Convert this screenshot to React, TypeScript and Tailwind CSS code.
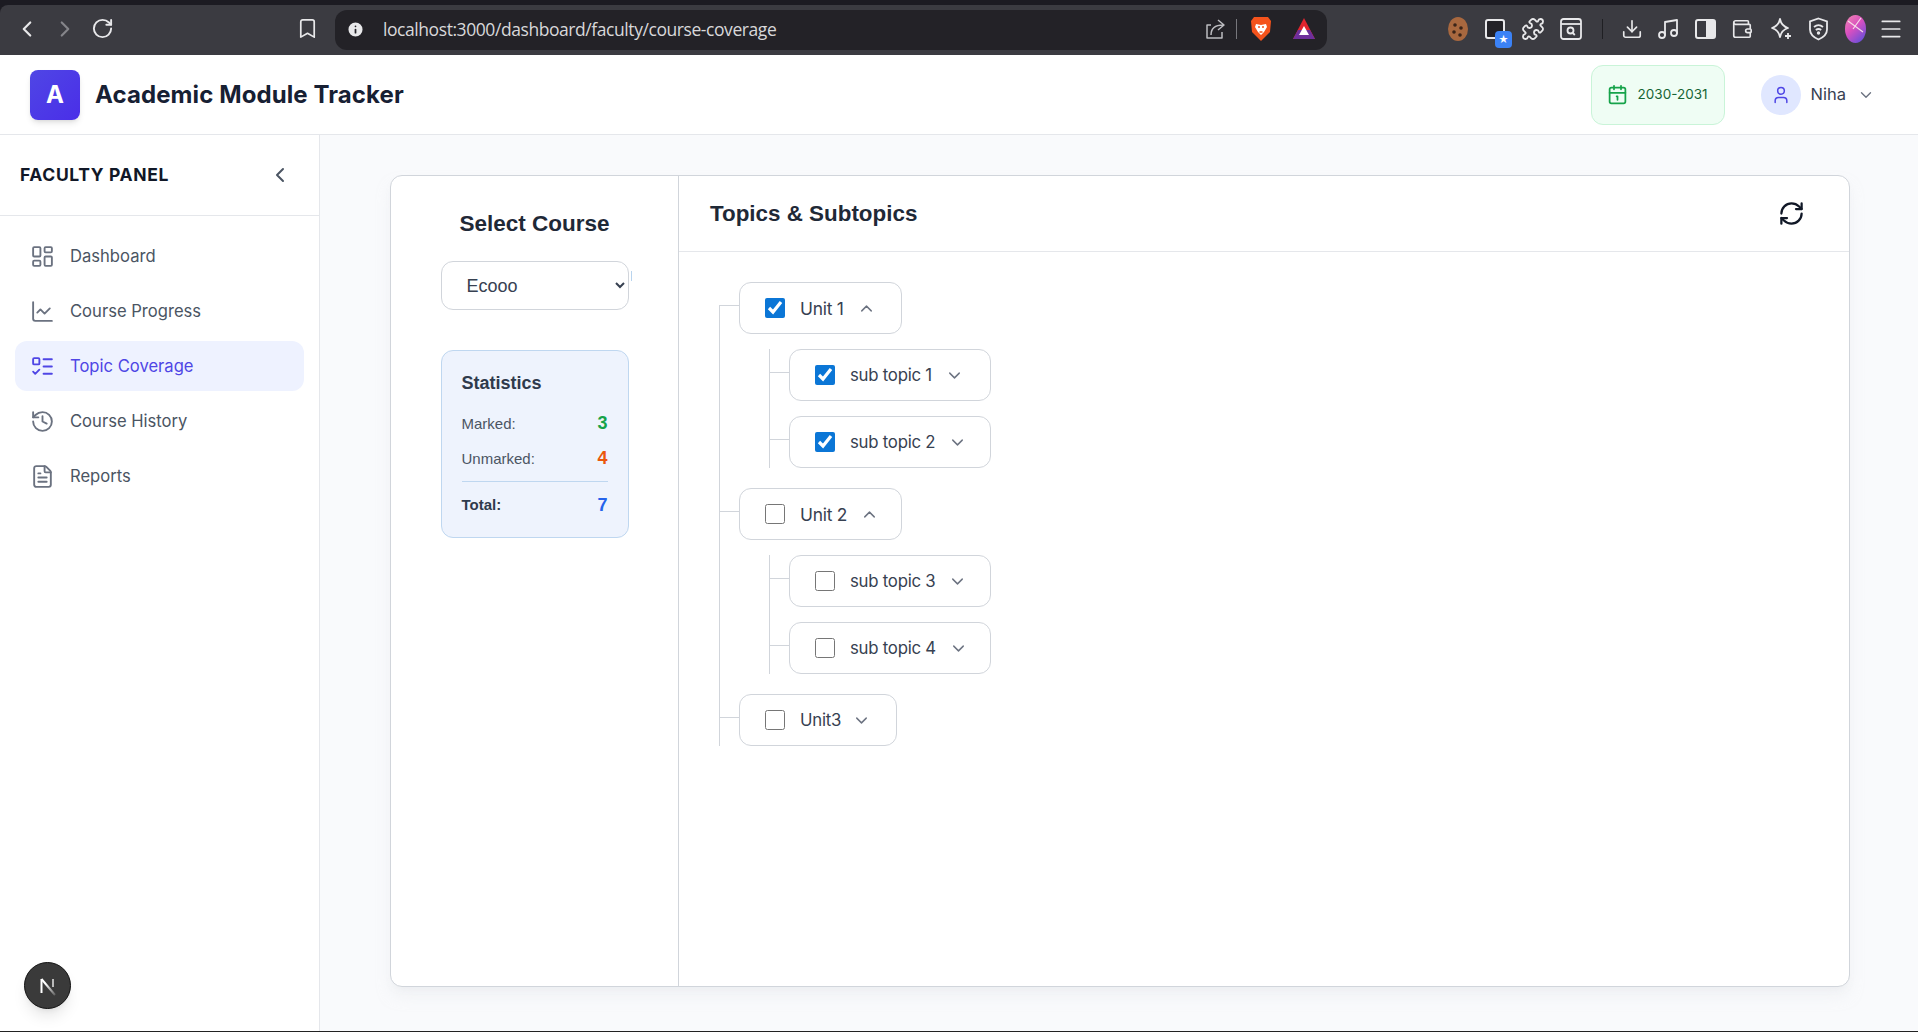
import React from "react";
import {
  ChevronLeft, ChevronRight, ChevronDown, ChevronUp, RotateCw, Bookmark, Info, Download, Music, Wallet, Menu, Puzzle, Calendar1, User,
  LayoutDashboard, LineChart, ListTodo, History, FileText, RefreshCw,
} from "lucide-react";

function BraveIcon() {
  return (
    <svg width="22" height="26" viewBox="0 0 22 26" aria-hidden="true">
      <path d="M4 1h14l3 4-1 11-9 9-9-9L1 5z" fill="#f4531c" />
      <path d="M6 8l5 1 5-1 1 3-3 5-3 3-3-3-3-5z" fill="#fff" />
      <path d="M8 11h2M12 11h2M9.500 16h3" stroke="#f4531c" strokeWidth="1.400" />
    </svg>
  );
}

function TriangleIcon() {
  return (
    <svg width="24" height="22" viewBox="0 0 24 22" aria-hidden="true">
      <path d="M12 0l11 21H1z" fill="#e0242e" />
      <path d="M1 21h22l-5-9H6z" fill="#6d2f9c" />
      <path d="M12 8l5 9H7z" fill="#fff" />
    </svg>
  );
}

function ShareIcon() {
  return (
    <svg className="ml-auto" width="22" height="22" viewBox="0 0 22 22" fill="none" stroke="#bcbcc0" strokeWidth="1.500" aria-hidden="true">
      <path d="M7 7H3v13h15v-6" strokeLinejoin="round" />
      <path d="M7 17c0-6 4-10 12-10M14 2l6 5-6 5" strokeLinejoin="round" />
    </svg>
  );
}

function CookieIcon() {
  return (
    <svg className="ml-[120px]" width="22" height="26" viewBox="0 0 22 26" aria-hidden="true">
      <ellipse cx="11" cy="13" rx="10" ry="12" fill="#a8683f" />
      <circle cx="8" cy="9" r="1.800" fill="#3a2418" />
      <circle cx="14" cy="12" r="1.800" fill="#3a2418" />
      <circle cx="7" cy="16" r="1.800" fill="#3a2418" />
      <circle cx="13" cy="19" r="1.800" fill="#3a2418" />
    </svg>
  );
}

function ReaderIcon() {
  return (
    <svg className="ml-[15px]" width="22" height="22" viewBox="0 0 22 22" fill="none" stroke="#e8e8ea" strokeWidth="1.800" aria-hidden="true">
      <rect x="1" y="1" width="20" height="20" rx="2.500" />
      <path d="M1 6h20" />
      <circle cx="10.500" cy="12.500" r="3" />
      <path d="M12.800 15l2 2" />
    </svg>
  );
}

function SparkleIcon() {
  return (
    <svg className="ml-[17px]" width="22" height="24" viewBox="0 0 22 24" fill="none" stroke="#e8e8ea" strokeWidth="1.800" aria-hidden="true">
      <path d="M10 2c1 5 3 7.500 8 9-5 1.500-7 4-8 9-1-5-3-7.500-8-9 5-1.500 7-4 8-9z" strokeLinejoin="round" />
      <path d="M18 16v6M15 19h6" />
    </svg>
  );
}

function BrowserBar() {
  return (
    <div className="h-[55px] shrink-0 bg-[#1c1b22] pt-[5px]">
      <div className="flex h-[50px] items-center rounded-tl-lg bg-[#3b3b41] text-[#e8e8ea]">
        <div className="flex w-[335px] items-center pb-[3px]">
          <ChevronLeft className="ml-[14px] size-[26px]" strokeWidth={2} />
          <ChevronRight className="ml-[12px] size-[26px] text-[#85858a]" strokeWidth={2} />
          <RotateCw className="ml-[13px] size-[23px]" strokeWidth={2} />
          <Bookmark className="ml-[182px] size-[23px]" strokeWidth={1.800} />
        </div>
        <div className="flex h-[40px] w-[992px] items-center rounded-xl bg-[#232227] pb-[2px] pl-[11px] pr-[11px]">
          <Info className="size-[19px] fill-[#e8e8ea] text-[#232227]" strokeWidth={2.200} />
          <span className="ml-[18px] font-['Open_Sans',sans-serif] text-[17.500px] tracking-[-0.430px] text-[#d8d8da]">localhost:3000/dashboard/faculty/course-coverage</span>
          <ShareIcon />
          <span className="ml-[10px] h-[20px] w-px bg-[#77777c]" />
          <span className="ml-[13px] flex"><BraveIcon /></span>
          <span className="ml-[20px] flex"><TriangleIcon /></span>
        </div>
        <div className="relative flex flex-1 items-center pb-[3px]">
          <CookieIcon />
          <span className="relative ml-[16px] flex size-[20px] rounded-[3px] border-2 border-[#e8e8ea] bg-[#232227]">
            <span className="absolute left-[8px] top-[10px] flex h-[17px] w-[17px] items-center justify-center rounded bg-[#3b82f6] text-[10px] leading-none text-white">★</span>
          </span>
          <Puzzle className="ml-[16px] size-[24px]" strokeWidth={1.800} />
          <ReaderIcon />
          <span className="ml-[20px] h-[20px] w-px bg-[#1f1f23]" />
          <Download className="ml-[18px] size-[22px]" strokeWidth={1.800} />
          <Music className="ml-[13px] size-[24px]" strokeWidth={1.800} />
          <span className="ml-[15px] flex h-[20px] w-[21px] rounded-[3px] border-2 border-[#e8e8ea]"><span className="ml-auto h-full w-[8px] bg-[#e8e8ea]" /></span>
          <Wallet className="ml-[15px] size-[22px]" strokeWidth={1.800} />
          <SparkleIcon />
          <svg className="ml-[16px]" width="21" height="24" viewBox="0 0 21 24" fill="none" stroke="#e8e8ea" strokeWidth="1.800" aria-hidden="true">
            <path d="M10.500 1.500l8.500 3v8c0 4.500-4 8-8.500 10-4.500-2-8.500-5.500-8.500-10v-8z" />
            <path d="M6 10c3-2.500 6-2.500 9 0M7.800 13c2-1.500 3.400-1.500 5.400 0" />
            <circle cx="10.500" cy="16" r="0.800" fill="#e8e8ea" />
          </svg>
          <svg className="ml-[16px]" width="21" height="28" viewBox="0 0 21 28" aria-hidden="true">
            <defs>
              <linearGradient id="orb" x1="0" y1="0" x2="0.700" y2="1">
                <stop offset="0" stopColor="#f08ab0" />
                <stop offset="0.500" stopColor="#d94fc0" />
                <stop offset="1" stopColor="#6d4fd8" />
              </linearGradient>
            </defs>
            <ellipse cx="10.500" cy="14" rx="10.500" ry="14" fill="url(#orb)" />
            <path d="M3 6l15 11M16 3L8 14" stroke="#f6dbe8" strokeWidth="1.200" fill="none" />
          </svg>
          <Menu className="ml-[12px] size-[26px]" strokeWidth={1.600} />
        </div>
      </div>
    </div>
  );
}

function AppHeader() {
  return (
    <header className="flex h-[80px] shrink-0 items-center border-b border-[#e5e7eb] bg-white pl-[30px] pr-[43px]">
      <div className="flex size-[50px] items-center justify-center rounded-lg bg-[linear-gradient(135deg,#4f46e5,#4a2ee8)] text-[24px] font-bold text-white shadow-md">A</div>
      <h1 className="ml-[15px] text-[24px] font-bold tracking-[0.100px] text-[#172033]">Academic Module Tracker</h1>
      <div className="ml-auto flex h-[60px] w-[134px] items-center rounded-xl border border-[#c9f4d8] bg-[#effdf4] pl-[15px]">
        <Calendar1 className="size-[21px] text-[#16a34a]" strokeWidth={2} />
        <span className="ml-[10px] text-[13.500px] text-[#166534]">2030-2031</span>
      </div>
      <div className="ml-[36px] flex items-center">
        <span className="flex size-[40px] items-center justify-center rounded-full bg-[#e0e7ff] text-[#4f46e5]"><User className="size-[20px]" strokeWidth={1.800} /></span>
        <span className="ml-[10px] text-[16.500px] text-[#374151]">Niha</span>
        <ChevronDown className="ml-[11px] size-[18px] text-[#6b7280]" strokeWidth={1.800} />
      </div>
    </header>
  );
}

const navItems = [
  { label: "Dashboard", Icon: LayoutDashboard },
  { label: "Course Progress", Icon: LineChart },
  { label: "Topic Coverage", Icon: ListTodo, active: true },
  { label: "Course History", Icon: History },
  { label: "Reports", Icon: FileText },
];

function Sidebar() {
  return (
    <aside className="flex w-[320px] shrink-0 flex-col border-r border-[#e5e7eb] bg-white">
      <div className="flex h-[81px] shrink-0 items-center justify-between border-b border-[#e5e7eb] pl-[20px] pr-[27px]">
        <span className="text-[17.500px] font-bold tracking-[0.650px] text-[#111827]">FACULTY PANEL</span>
        <ChevronLeft className="size-[24px] text-[#4b5563]" strokeWidth={2} />
      </div>
      <nav className="flex flex-col gap-[5px] px-[15px] pt-[15px]">
        {navItems.map(({ label, Icon, active }) => (
          <div key={label} className={`flex h-[50px] items-center rounded-xl pl-[15px] text-[16.600px] ${active ? "bg-[#eef2ff] text-[#4f46e5]" : "text-[#4b5563]"}`}>
            <Icon className={`size-[25px] ${active ? "text-[#4f46e5]" : "text-[#6b7280]"}`} strokeWidth={1.800} />
            <span className="ml-[15px]">{label}</span>
          </div>
        ))}
      </nav>
    </aside>
  );
}

function StatRow({ label, value, color }: { label: string; value: number; color: string }) {
  return (
    <div className="flex h-[35px] items-center justify-between">
      <span className="pt-[2px] text-[15px] text-[#4b5563]">{label}</span>
      <span className={`text-[18px] font-bold ${color}`}>{value}</span>
    </div>
  );
}

function LeftPanel() {
  return (
    <div className="relative flex w-[288px] shrink-0 flex-col items-center border-r border-[#d1d5db] pt-[33px] font-['Liberation_Sans',sans-serif]">
      <h2 className="text-[22.500px] font-bold leading-[30px] text-[#1f2937]">Select Course</h2>
      <select className="mt-[22px] h-[49px] w-[188px] rounded-xl border border-[#d1d5db] bg-white pl-[21px] text-[18px] text-[#374151]" defaultValue="Ecooo">
        <option>Ecooo</option>
      </select>
      <span className="absolute left-[240px] top-[95px] h-[10px] w-px bg-[#b9d4ee]" />
      <div className="mt-[40px] h-[188px] w-[188px] rounded-xl border border-[#bfd7f0] bg-[#eef3fd] px-[20px] pt-[21px]">
        <h3 className="text-[18px] font-bold leading-[22px] text-[#2f3a4c]">Statistics</h3>
        <div className="mt-[12px]">
          <StatRow label="Marked:" value={3} color="text-[#16a34a]" />
          <StatRow label="Unmarked:" value={4} color="text-[#ea580c]" />
        </div>
        <div className="mt-[5px] flex h-[47px] items-center justify-between border-t border-[#bfd7f0]">
          <span className="text-[15px] font-bold text-[#2f3a4c]">Total:</span>
          <span className="text-[18px] font-bold text-[#2563eb]">7</span>
        </div>
      </div>
    </div>
  );
}

function TreeNode({ label, checked, open, width, textSize = "text-[16.800px]", chevronGap = "ml-[13px]" }: { label: string; checked?: boolean; open?: boolean; width: string; textSize?: string; chevronGap?: string }) {
  const Chevron = open ? ChevronUp : ChevronDown;
  return (
    <div className={`relative flex h-[52px] items-center rounded-xl border border-[#d1d5db] bg-white pl-[25px] ${width}`}>
      <span className="absolute left-[-21px] top-[22px] h-px w-[20px] bg-[#d1d5db]" />
      <input type="checkbox" checked={!!checked} readOnly className="m-0 size-[20px] accent-[#0b76d6]" />
      <span className={`ml-[15px] pt-[2px] tracking-[-0.250px] text-[#374151] ${textSize}`}>{label}</span>
      <Chevron className={`size-[19px] text-[#6b7280] ${chevronGap}`} strokeWidth={1.800} />
    </div>
  );
}

function SubTree({ children }: { children: React.ReactNode }) {
  return <div className="mt-[15px] ml-[30px] flex flex-col gap-[15px] border-l border-[#d1d5db] pl-[19px]">{children}</div>;
}

function RightPanel() {
  return (
    <div className="flex min-w-0 flex-1 flex-col">
      <div className="flex h-[76px] shrink-0 items-center justify-between border-b border-[#e5e7eb] pl-[31px] pr-[44px]">
        <h2 className="font-['Liberation_Sans',sans-serif] text-[22.400px] font-bold text-[#1f2937]">Topics &amp; Subtopics</h2>
        <RefreshCw className="mb-[1px] size-[27px] text-[#111827]" strokeWidth={2} />
      </div>
      <div className="relative ml-[40px] mt-[30px] flex w-fit flex-col pl-[20px] font-['Inter',sans-serif]">
        <span className="absolute bottom-0 left-0 top-[23px] w-px bg-[#d1d5db]" />
        <TreeNode label="Unit 1" checked open width="w-[163px]" textSize="text-[17.400px]" />
        <SubTree>
          <TreeNode label="sub topic 1" checked width="w-[202px]" />
          <TreeNode label="sub topic 2" checked width="w-[202px]" />
        </SubTree>
        <div className="mt-[20px]"><TreeNode label="Unit 2" open width="w-[163px]" textSize="text-[17.400px]" /></div>
        <SubTree>
          <TreeNode label="sub topic 3" width="w-[202px]" />
          <TreeNode label="sub topic 4" width="w-[202px]" />
        </SubTree>
        <div className="mt-[20px]"><TreeNode label="Unit3" width="w-[158px]" chevronGap="ml-[11px]" /></div>
      </div>
    </div>
  );
}

export default function App() {
  return (
    <div className="relative flex h-[1032px] w-[1918px] flex-col overflow-hidden border-b border-[#222] bg-white font-['Inter',sans-serif]">
      <BrowserBar />
      <AppHeader />
      <div className="flex min-h-0 flex-1">
        <Sidebar />
        <main className="flex min-w-0 flex-1 bg-[#f9fafc] pb-[44px] pl-[70px] pr-[68px] pt-[40px]">
          <div className="flex flex-1 rounded-xl border border-[#d1d5db] bg-white shadow-lg shadow-gray-200/50">
            <LeftPanel />
            <RightPanel />
          </div>
        </main>
      </div>
      <div className="absolute left-[24px] top-[962px] flex size-[47px] items-center justify-center rounded-full border border-[#111] bg-[#3a3a3a] shadow-lg">
        <svg width="20" height="20" viewBox="0 0 20 20" aria-hidden="true">
          <defs>
            <linearGradient id="nfade" x1="0" y1="0" x2="1" y2="1">
              <stop offset="0.300" stopColor="#fff" />
              <stop offset="1" stopColor="#fff" stopOpacity="0.200" />
            </linearGradient>
          </defs>
          <path d="M3.500 3v14" stroke="#fff" strokeWidth="2" fill="none" />
          <path d="M3.500 3L17 19" stroke="url(#nfade)" strokeWidth="2" fill="none" />
          <path d="M15 3v8" stroke="#e5e5e5" strokeWidth="1.500" fill="none" />
        </svg>
      </div>
    </div>
  );
}
